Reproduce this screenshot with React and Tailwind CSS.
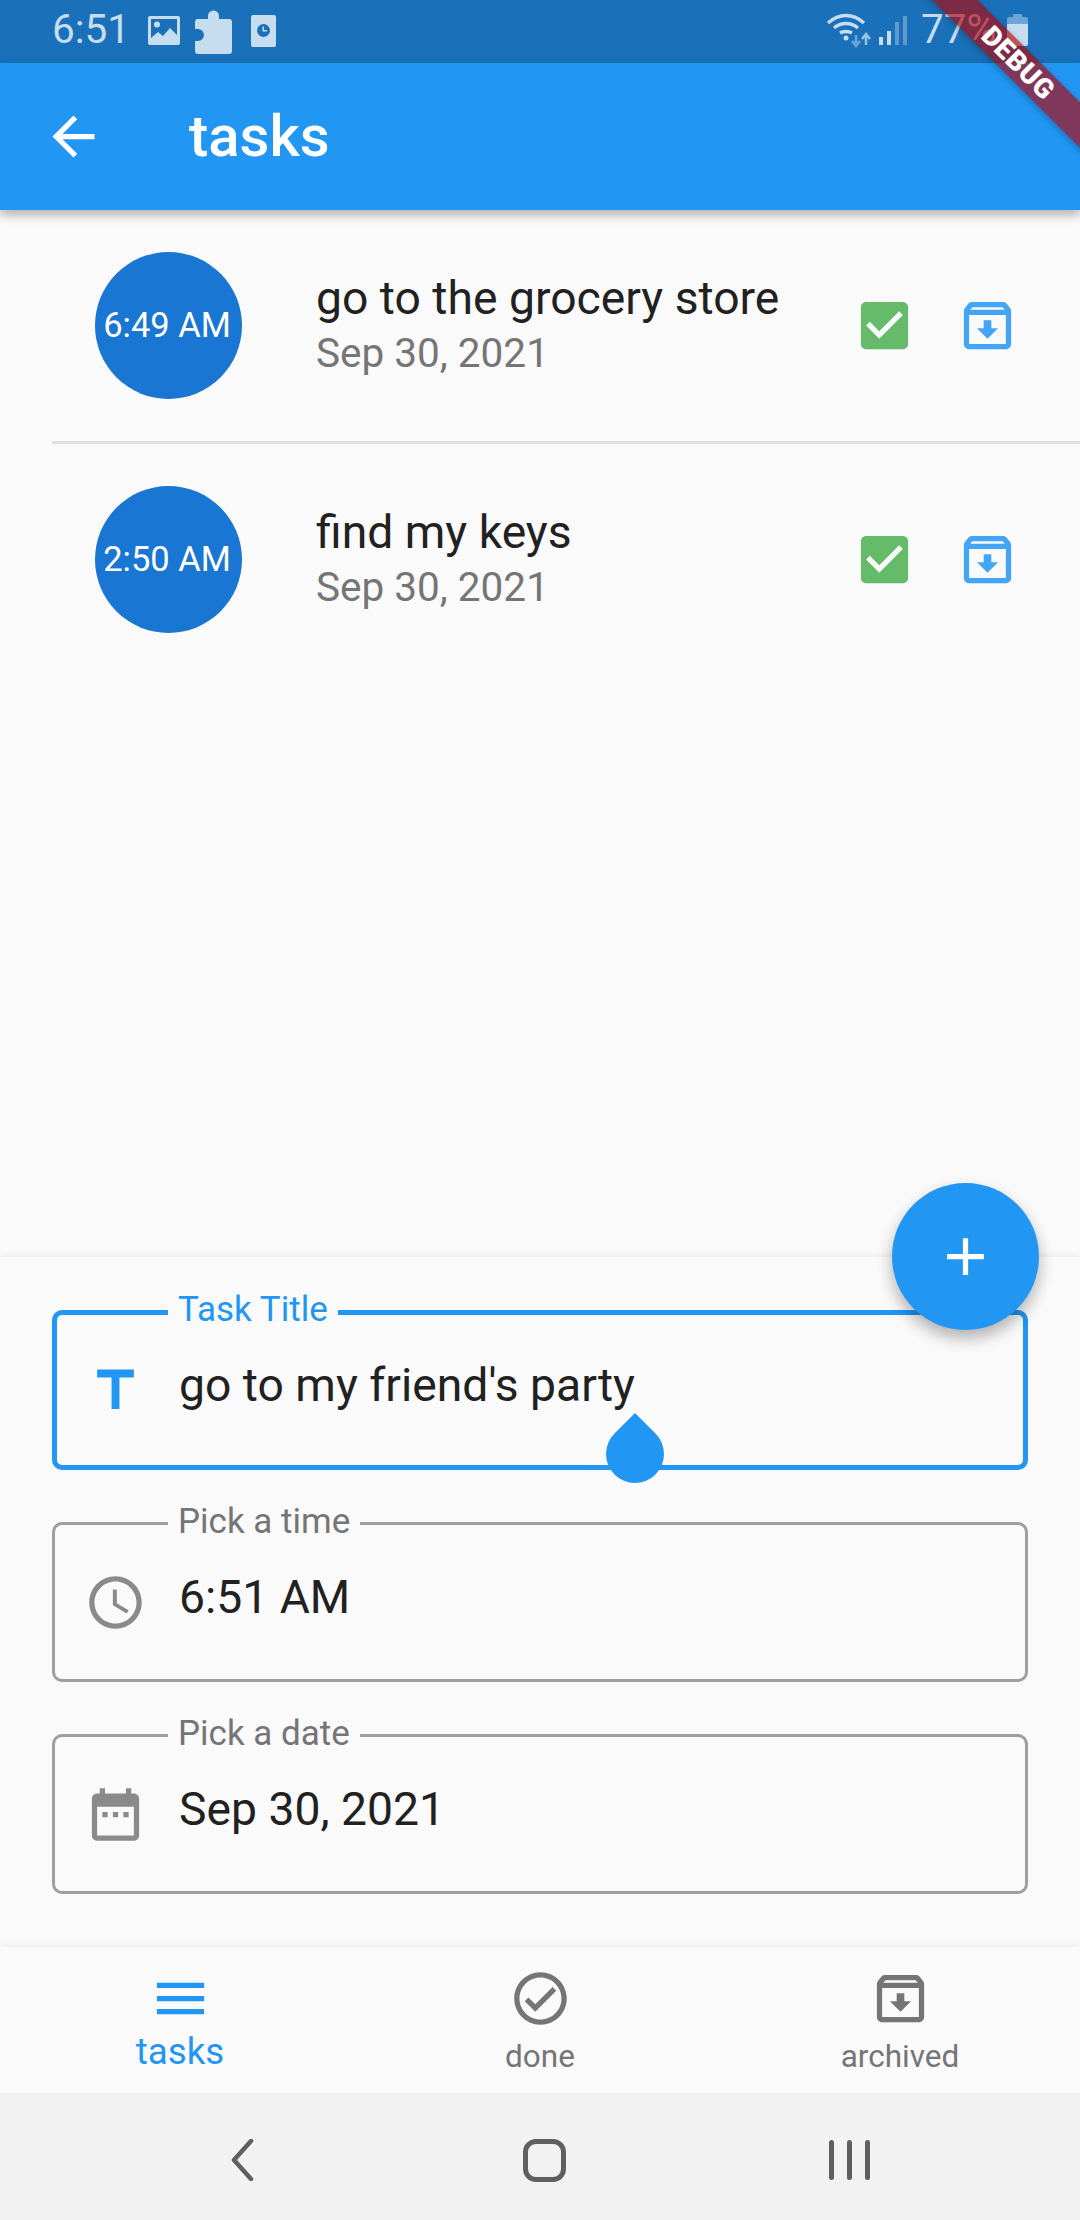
import React from 'react';

const paths = {
  back: 'M20 11H7.83l5.59-5.59L12 4l-8 8 8 8 1.41-1.41L7.83 13H20v-2z',
  checkBox: 'M19 3H5c-1.11 0-2 .9-2 2v14c0 1.1.89 2 2 2h14c1.11 0 2-.9 2-2V5c0-1.1-.89-2-2-2zm-9 14l-5-5 1.41-1.41L10 14.17l7.59-7.59L19 8l-9 9z',
  archive: 'M20.54 5.23l-1.39-1.68C18.88 3.21 18.47 3 18 3H6c-.47 0-.88.21-1.16.55L3.46 5.23C3.17 5.57 3 6.02 3 6.5V19c0 1.1.9 2 2 2h14c1.1 0 2-.9 2-2V6.5c0-.48-.17-.93-.46-1.27zM6.24 5h11.52l.81.97H5.44l.8-.97zM5 19V8h14v11H5zm8.45-9h-2.9v3H8l4 4 4-4h-2.55z',
  done: 'M12 2C6.48 2 2 6.48 2 12s4.48 10 10 10 10-4.48 10-10S17.52 2 12 2zm0 18c-4.41 0-8-3.59-8-8s3.59-8 8-8 8 3.59 8 8-3.59 8-8 8zm4.59-12.42L10 14.17l-2.59-2.58L6 13l4 4 8-8z',
  menu: 'M3 18h18v-2H3v2zm0-5h18v-2H3v2zm0-7v2h18V6H3z',
  clock: 'M11.99 2C6.47 2 2 6.48 2 12s4.47 10 9.99 10C17.52 22 22 17.52 22 12S17.52 2 11.99 2zM12 20c-4.42 0-8-3.58-8-8s3.58-8 8-8 8 3.58 8 8-3.58 8-8 8zm.5-13H11v6l5.25 3.15.75-1.23-4.5-2.67z',
  date: 'M9 11H7v2h2v-2zm4 0h-2v2h2v-2zm4 0h-2v2h2v-2zm2-7h-1V2h-2v2H8V2H6v2H5c-1.11 0-1.99.9-1.99 2L3 20c0 1.1.89 2 2 2h14c1.1 0 2-.9 2-2V6c0-1.1-.9-2-2-2zm0 16H5V9h14v11z',
  title: 'M5 4v3h5.5v12h3V7H19V4z',
  add: 'M19 13h-6v6h-2v-6H5v-2h6V5h2v6h6v2z',
};

function Icon({ name, className }) {
  return (
    <svg viewBox="0 0 24 24" fill="currentColor" className={className}>
      <path d={paths[name]} />
    </svg>
  );
}

function StatusBar() {
  return (
    <div className="h-[63px] shrink-0 bg-[#1a71b9] text-[#c6dcef] flex items-center pl-[52px] pr-[52px]">
      <span className="text-[40.5px] leading-none mt-[-4px] w-[72px]">6:51</span>
      <svg viewBox="0 0 32 29" className="w-[32px] h-[29px] ml-[24px] mt-[-3px]" fill="currentColor">
        <path fillRule="evenodd" d="M2 0h28a2 2 0 0 1 2 2v25a2 2 0 0 1-2 2H2a2 2 0 0 1-2-2V2a2 2 0 0 1 2-2zm1 3v19l7-6 5 4 7-8 7 7V3H3zm6 2.500a3 3 0 1 1 0 6 3 3 0 0 1 0-6z" />
      </svg>
      <svg viewBox="0 0 37 44" className="w-[37px] h-[44px] ml-[15px]" fill="currentColor">
        <path d="M13 9V6a5.500 5.500 0 0 1 11 0v3h10a3 3 0 0 1 3 3v29a3 3 0 0 1-3 3H3a3 3 0 0 1-3-3V31h3a6 6 0 0 0 0-12H0v-7a3 3 0 0 1 3-3h10z" />
      </svg>
      <svg viewBox="0 0 25 32" className="w-[25px] h-[32px] ml-[19px] mt-[-1px]" fill="currentColor">
        <path fillRule="evenodd" d="M2 0h21a2 2 0 0 1 2 2v28a2 2 0 0 1-2 2H2a2 2 0 0 1-2-2V2a2 2 0 0 1 2-2zm10.500 9a6.500 6.500 0 1 0 0 13 6.500 6.500 0 0 0 0-13zm-1 2.500h1.500V15h3v1.500h-4.500v-5z" />
      </svg>
      <div className="flex-1" />
      <svg viewBox="0 0 54 42" className="w-[54px] h-[42px] mt-[-5px]" fill="none" stroke="currentColor">
        <path d="M3 15C14 5 28 5 39 15" strokeWidth="3.500" />
        <path d="M9 20c7-6 17-6 24 0" strokeWidth="3.500" />
        <path d="M15 25c3-2 9-2 12 0" strokeWidth="3.500" />
        <circle cx="21" cy="30" r="2.500" fill="currentColor" stroke="none" />
        <path d="M31 27v10m-4-4l4 5 4-5" strokeWidth="2.500" stroke="#6ba5d6" />
        <path d="M41 37V27m-4 4l4-5 4 5" strokeWidth="2.500" stroke="#9cc2e3" />
      </svg>
      <div className="flex items-end gap-[4px] h-[30px] mr-[14px] mt-[-3px]">
        <div className="w-[4px] h-[8px] bg-[#c6dcef]" />
        <div className="w-[4px] h-[14px] bg-[#c6dcef]" />
        <div className="w-[4px] h-[23px] bg-[#5e9ccf]" />
        <div className="w-[4px] h-[29px] bg-[#5e9ccf]" />
      </div>
      <span className="text-[40.5px] leading-none mt-[-4px] w-[86px] whitespace-nowrap">77%</span>
      <div className="w-[21px] h-[32px] flex flex-col items-center mt-[-4px]">
        <div className="w-[9px] h-[3px] bg-[#6ba5d6] rounded-t-[1px]" />
        <div className="w-[21px] h-[7px] bg-[#6ba5d6] rounded-t-[2px]" />
        <div className="w-[21px] h-[22px] bg-[#c6dcef] rounded-b-[2px]" />
      </div>
    </div>
  );
}

function AppBar() {
  return (
    <div className="h-[147px] shrink-0 bg-[#2196f3] text-white flex items-center pl-[42px] shadow-[0_5px_10px_rgba(0,0,0,0.3)] relative z-10">
      <Icon name="back" className="w-[63px] h-[63px]" />
      <span className="ml-[84px] text-[58px] leading-none font-medium mt-[-2px]">tasks</span>
    </div>
  );
}

function TaskRow({ time, title }) {
  return (
    <div className="flex items-center h-[231px] pl-[95px]">
      <div className="w-[147px] h-[147px] rounded-full bg-[#1976d2] text-white text-[34.5px] pr-[3px] flex items-center justify-center shrink-0 whitespace-nowrap">
        {time}
      </div>
      <div className="ml-[74px] flex-1 min-w-0">
        <div className="text-[46.25px] leading-[55px] text-[#212121]">{title}</div>
        <div className="text-[40.5px] leading-[55px] text-[#757575]">Sep 30, 2021</div>
      </div>
      <Icon name="checkBox" className="w-[63px] h-[63px] text-[#66bb6a] shrink-0" />
      <Icon name="archive" className="w-[63px] h-[63px] text-[#42a5f5] shrink-0 ml-[40px] mr-[61px]" />
    </div>
  );
}

function Field({ label, value, icon, active, children }) {
  return (
    <div className={active ? 'relative h-[160px] rounded-[10px] border-[5px] border-[#2196f3] flex items-center pl-[27px]' : 'relative h-[160px] rounded-[10px] border-[3px] border-[#9e9e9e] flex items-center pl-[29px]'}>
      <span className={active ? 'absolute left-[111px] top-[-26px] px-[10px] bg-[#fafafa] text-[35px] leading-[42px] text-[#2196f3]' : 'absolute left-[113px] top-[-24px] px-[10px] bg-[#fafafa] text-[35px] leading-[42px] text-[#757575]'}>
        {label}
      </span>
      <Icon name={icon} className={active ? 'w-[63px] h-[63px] text-[#2196f3] shrink-0' : 'w-[63px] h-[63px] text-[#8a8a8a] shrink-0'} />
      <span className="ml-[32px] text-[46.25px] leading-none text-[#212121] mt-[-10px]">{value}</span>
      {children}
    </div>
  );
}

function NavItem({ icon, label, active }) {
  return (
    <div className={active ? 'flex flex-col items-center text-[#2196f3]' : 'flex flex-col items-center text-[#757575]'}>
      <Icon name={icon} className="w-[63px] h-[63px]" />
      <span className={active ? 'text-[36.75px] leading-[40px] mt-[2px]' : 'text-[31.5px] leading-[36px] mt-[9px]'}>{label}</span>
    </div>
  );
}

export default function App() {
  return (
    <div className="w-[1080px] h-[2220px] bg-[#fafafa] flex flex-col relative overflow-hidden font-['Roboto',sans-serif]">
      <StatusBar />
      <AppBar />

      <div className="flex-1 min-h-0">
        <TaskRow time="6:49 AM" title="go to the grocery store" />
        <div className="h-[3px] ml-[52px] bg-[#e0e0e0]" />
        <TaskRow time="2:50 AM" title="find my keys" />
      </div>

      <div className="relative shrink-0 h-[690px] bg-[#fafafa] px-[52px] pt-[53px] flex flex-col gap-[52px] shadow-[0_-2px_6px_rgba(0,0,0,0.06)]">
        <Field label="Task Title" value="go to my friend's party" icon="title" active>
          <div className="absolute left-[549px] bottom-[-18px] w-[58px] h-[58px] rotate-45 rounded-full rounded-tl-none bg-[#2196f3]" />
        </Field>
        <Field label="Pick a time" value="6:51 AM" icon="clock" />
        <Field label="Pick a date" value="Sep 30, 2021" icon="date" />
        <button className="absolute right-[41px] top-[-74px] w-[147px] h-[147px] rounded-full bg-[#2196f3] text-white flex items-center justify-center shadow-[0_8px_16px_rgba(0,0,0,0.3)]">
          <Icon name="add" className="w-[63px] h-[63px]" />
        </button>
      </div>

      <div className="h-[146px] shrink-0 bg-[#fafafa] grid grid-cols-3 pt-[20px] shadow-[0_-2px_6px_rgba(0,0,0,0.06)] relative">
        <NavItem icon="menu" label="tasks" active />
        <NavItem icon="done" label="done" />
        <NavItem icon="archive" label="archived" />
      </div>

      <div className="h-[127px] shrink-0 bg-[#f2f2f2] flex items-center text-[#5f5f5f] pt-[7px]">
        <svg viewBox="0 0 24 42" className="w-[24px] h-[42px] ml-[230px]" fill="none" stroke="currentColor" strokeWidth="4.500" strokeLinecap="round" strokeLinejoin="round">
          <path d="M21 2L4 21l17 19" />
        </svg>
        <div className="w-[43px] h-[43px] ml-[269px] rounded-[13px] border-[5px] border-[#5f5f5f]" />
        <div className="flex gap-[13px] ml-[263px]">
          <div className="w-[5px] h-[40px] rounded-full bg-[#5f5f5f]" />
          <div className="w-[5px] h-[40px] rounded-full bg-[#5f5f5f]" />
          <div className="w-[5px] h-[40px] rounded-full bg-[#5f5f5f]" />
        </div>
      </div>

      <div className="absolute left-[868px] top-[47px] z-20 w-[300px] h-[32px] rotate-45 bg-[#b80000a0] shadow-[0_2px_6px_rgba(0,0,0,0.25)] flex items-center justify-center text-white text-[27.5px] font-black tracking-[0.5px] leading-none">
        DEBUG
      </div>
    </div>
  );
}
